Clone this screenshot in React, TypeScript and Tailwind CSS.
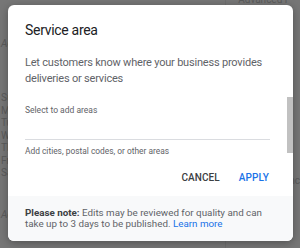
import React from 'react';

const days = ["Su", "Mo", "Tu", "We", "Th", "Fri", "Sat"];

export default function App() {
  return (
    <div className="relative w-[300px] h-[248px] overflow-hidden bg-[#767676] font-['Roboto',sans-serif]">
      {/* page behind the overlay */}
      <div className="flex h-full">
        <div className="w-[228px] border-r border-[#6e6e6e] pl-[1px] text-[10px] text-[#5a5a5a]">
          <div className="h-[36px]" />
          <div className="italic">Ad</div>
          <div className="h-[41px]" />
          <div className="flex flex-col leading-[12.5px]">
            {days.map((d) => (
              <div key={d}>{d}</div>
            ))}
          </div>
          <div className="h-[27px]" />
          <div className="italic">Ad</div>
        </div>
        <div className="flex-1 text-[10px] text-[#5a5a5a]">
          <div className="mt-[-5px] pl-[12px] leading-[10px]">Advanced i</div>
          <div className="mt-[168px] pl-[63px]">nc</div>
        </div>
      </div>

      {/* dialog */}
      <div className="absolute left-[8px] top-[5px] w-[285px] h-[236px] rounded-[6px] bg-white overflow-hidden shadow-[0_2px_8px_rgba(0,0,0,0.3)] flex flex-col">
        <div className="relative flex-1 pl-[17px] pr-[23px]">
          <div className="pt-[16px] text-[14px] leading-[18px] tracking-[-0.3px] text-[#202124]">Service area</div>
          <div className="mt-[16px] mr-[-12px] text-[11px] leading-[16px] tracking-[-0.2px] text-[#5f6368]">
            Let customers know where your business provides deliveries or services
          </div>
          <div className="mt-[18px] text-[8.5px] leading-[11px] text-[#5f6368]">Select to add areas</div>
          <div className="mt-[23px] w-[245px] border-b border-[#dadce0]" />
          <div className="mt-[6px] text-[8.4px] leading-[11px] text-[#5f6368]">
            Add cities, postal codes, or other areas
          </div>
          <div className="mt-[15px] flex justify-end gap-[19px] pr-[1px] text-[10px] leading-[12px] font-medium tracking-[0.1px]">
            <span className="text-[#3c4043]">CANCEL</span>
            <span className="text-[#1a73e8]">APPLY</span>
          </div>
          <div className="absolute right-0 top-[92px] w-[6px] h-[56px] bg-[#c1c1c1]" />
        </div>
        <div className="h-[45px] bg-[#f8f9fa] pl-[17px] pr-[23px] pt-[11px] text-[9.8px] leading-[11px] text-[#5f6368]">
          <span className="font-bold text-[#3c4043]">Please note:</span> Edits may be reviewed for quality and can take up to 3 days to be published.{" "}
          <span className="text-[#1a73e8]">Learn more</span>
        </div>
      </div>
    </div>
  );
}
